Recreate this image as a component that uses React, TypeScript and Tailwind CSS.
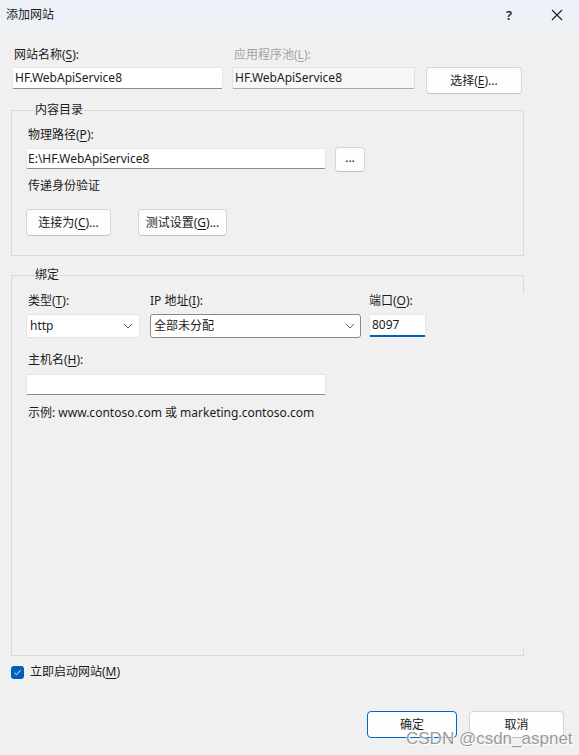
import React from "react";

const F = {
  fontFamily: '"Segoe UI", "Noto Sans", "Noto Sans CJK SC", sans-serif',
};

function U({ c }: { c: string }) {
  return <span className="underline underline-offset-[2px] decoration-[1px]">{c}</span>;
}

function Chevron() {
  return (
    <svg width="10" height="6" viewBox="0 0 10 6" className="shrink-0">
      <path d="M1 1 L5 5 L9 1" fill="none" stroke="#5f5f5f" strokeWidth="1" />
    </svg>
  );
}

function Btn({ children, w, className = "" }: { children: React.ReactNode; w: string; className?: string }) {
  return (
    <div
      className={`${w} h-[27px] flex items-center justify-center rounded-[4px] border border-[#d5d5d5] border-b-[#c2c2c2] bg-[#fdfdfd] text-[12px] text-[#1b1b1b] ${className}`}
    >
      {children}
    </div>
  );
}

export default function App() {
  return (
    <div
      className="w-[579px] h-[755px] bg-[#f0f0f0] relative overflow-hidden text-[12px] leading-[16px] text-[#1b1b1b]"
      style={F}
    >
      {/* Title bar */}
      <div className="h-[30px] bg-[#eef2f8] flex items-center pl-[6px]">
        <span className="flex-1">添加网站</span>
        <span className="w-[12px] text-center text-[13px] font-semibold mr-[36px]">?</span>
        <svg width="12" height="12" viewBox="0 0 12 12" className="mr-[16px]">
          <path d="M1 1 L11 11 M11 1 L1 11" stroke="#1b1b1b" strokeWidth="1.1" />
        </svg>
      </div>

      <div className="pl-[11px] pt-[17px]">
        {/* Row 1 */}
        <div className="flex pl-[1px]">
          <div className="w-[211px]">
            <div className="pl-[2px] h-[16px]">
              网站名称(<U c="S" />):
            </div>
            <div className="mt-[4px] h-[22px] bg-white border border-[#e6e6e6] border-b-[#8c8c8c] rounded-[2px] flex items-center pl-[2px]">
              HF.WebApiService8
            </div>
          </div>
          <div className="w-[183px] ml-[9px]">
            <div className="pl-[2px] h-[16px] text-[#a3a3a3]">
              应用程序池(<U c="L" />):
            </div>
            <div className="mt-[4px] h-[22px] bg-[#f7f7f7] border border-[#e2e2e2] border-b-[#a8a8a8] rounded-[2px] flex items-center pl-[2px]">
              HF.WebApiService8
            </div>
          </div>
          <div className="ml-[11px] mt-[20px]">
            <Btn w="w-[96px]">
              选择(<U c="E" />)...
            </Btn>
          </div>
        </div>

        {/* Group 1 */}
        <fieldset className="mt-[8px] w-[513px] border border-[#dadada] pl-[14px] pb-[19px]">
          <legend className="ml-[8px] px-[1px] h-[16px]">内容目录</legend>
          <div className="mt-[9px] pl-[2px] h-[16px]">
            物理路径(<U c="P" />):
          </div>
          <div className="mt-[4px] flex items-start">
            <div className="mt-[1px] w-[300px] h-[21px] bg-white border border-[#e6e6e6] border-b-[#8c8c8c] rounded-[2px] flex items-center pl-[1px]">
              E:\HF.WebApiService8
            </div>
            <div className="ml-[9px] w-[30px] h-[25px] rounded-[4px] border border-[#d5d5d5] border-b-[#c2c2c2] bg-[#fdfdfd] flex items-center justify-center pb-[3px]">
              ...
            </div>
          </div>
          <div className="mt-[6px] pl-[2px] h-[16px]">传递身份验证</div>
          <div className="mt-[15px] flex">
            <Btn w="w-[85px]">
              连接为(<U c="C" />)...
            </Btn>
            <Btn w="w-[89px]" className="ml-[27px]">
              测试设置(<U c="G" />)...
            </Btn>
          </div>
        </fieldset>

        {/* Group 2 */}
        <fieldset className="relative mt-[11px] w-[513px] h-[389px] border border-r-0 border-[#dadada] pl-[14px]">
          <legend className="ml-[8px] px-[1px] h-[16px]">绑定</legend>
          <span className="absolute right-0 top-[-8px] w-px h-[18px] bg-[#dadada]" />
          <span className="absolute right-0 bottom-0 w-px h-[7px] bg-[#dadada]" />
          <div className="mt-[10px] flex">
            <div className="w-[114px]">
              <div className="pl-[2px] h-[16px]">
                类型(<U c="T" />):
              </div>
              <div className="mt-[5px] h-[24px] bg-white border border-[#e3e3e3] rounded-[3px] flex items-center pl-[3px] pr-[6px]">
                <span className="flex-1">http</span>
                <Chevron />
              </div>
            </div>
            <div className="w-[211px] ml-[10px]">
              <div className="h-[16px]">
                IP 地址(<U c="I" />):
              </div>
              <div className="mt-[5px] h-[24px] bg-white border border-[#8a8a8a] rounded-[3px] flex items-center pl-[3px] pr-[5px]">
                <span className="flex-1">全部未分配</span>
                <Chevron />
              </div>
            </div>
            <div className="w-[57px] ml-[8px]">
              <div className="h-[16px]">
                端口(<U c="O" />):
              </div>
              <div className="mt-[5px] h-[23px] bg-white border border-[#e6e6e6] border-b-2 border-b-[#005fb8] rounded-[2px] flex items-center pl-[2px]">
                8097
              </div>
            </div>
          </div>
          <div className="mt-[14px] pl-[2px] h-[16px]">
            主机名(<U c="H" />):
          </div>
          <div className="mt-[6px] w-[300px] h-[21px] bg-white border border-[#e6e6e6] border-b-[#8c8c8c] rounded-[2px]" />
          <div className="mt-[10px] pl-[2px] h-[16px]">
            示例: www.contoso.com 或 marketing.contoso.com
          </div>
        </fieldset>

        {/* Checkbox */}
        <div className="mt-[8px] flex items-center h-[16px]">
          <div className="w-[13px] h-[13px] rounded-[3px] bg-[#005fb8] flex items-center justify-center">
            <svg width="9" height="9" viewBox="0 0 9 9">
              <path d="M1.5 4.8 L3.5 6.7 L7.5 2.3" fill="none" stroke="white" strokeWidth="1" />
            </svg>
          </div>
          <span className="ml-[6px]">
            立即启动网站(<U c="M" />)
          </span>
        </div>

        {/* Buttons */}
        <div className="mt-[31px] flex justify-end pr-[15px]">
          <div className="w-[90px] h-[27px] flex items-center justify-center rounded-[4px] border-[1.5px] border-[#0067c0] bg-[#fdfdfd]">
            确定
          </div>
          <Btn w="w-[95px]" className="ml-[12px]">
            取消
          </Btn>
        </div>
      </div>

      {/* Watermark */}
      <div
        className="absolute left-[406px] top-[729px] text-[17px] leading-[20px] text-[#9a9a9a]"
        style={{
          fontFamily: '"Liberation Sans", Arial, sans-serif',
          textShadow: "0 0 1px #fff, 0 0 1px #fff, 1px 1px 0 #fff",
        }}
      >
        CSDN @csdn_aspnet
      </div>
    </div>
  );
}
